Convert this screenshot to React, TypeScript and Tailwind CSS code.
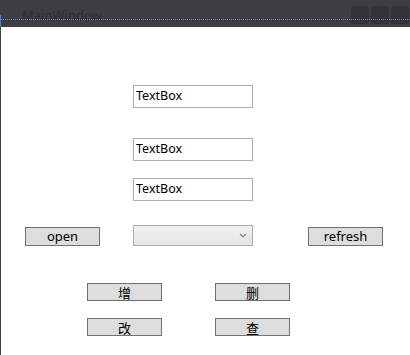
import React from "react";

const font = { fontFamily: '"Noto Sans", "Noto Sans CJK SC", sans-serif' };
const cjk = { fontFamily: '"Noto Sans CJK SC", sans-serif' };

function Btn({ label, w = "w-[75px]", h = "h-[19px]", ml, zh }: { label: string; w?: string; h?: string; ml: string; zh?: boolean }) {
  return (
    <div
      className={`${ml} ${w} ${h} shrink-0 bg-[#dddddd] border border-[#707070] flex items-center justify-center text-[13px] leading-none text-black`}
      style={zh ? cjk : font}
    >
      {label}
    </div>
  );
}

function TextBox({ mt }: { mt: string }) {
  return (
    <div
      className={`${mt} ml-[132px] w-[120px] h-[23px] border border-[#abadb3] bg-white flex items-start pl-[2px] pt-[1px] text-[12.5px] leading-[17px] text-black`}
      style={font}
    >
      TextBox
    </div>
  );
}

export default function App() {
  return (
    <div className="w-[410px] h-[355px] bg-white flex flex-col overflow-hidden">
      <div className="relative h-[27px] shrink-0 bg-[#3e3e42] flex items-start">
        <div className="ml-[22px] mt-[6px] text-[13px] leading-[18px] text-[#2e2e32]" style={font}>
          MainWindow
        </div>
        <div className="ml-auto mt-[6px] mr-[1px] flex gap-[2px]">
          <div className="w-[18px] h-[18px] rounded-[3px] bg-[#333337]" />
          <div className="w-[18px] h-[18px] rounded-[3px] bg-[#333337]" />
          <div className="w-[18px] h-[18px] rounded-[3px] bg-[#333337]" />
        </div>
        <div className="absolute left-0 right-0 top-[19px] border-t border-dotted border-[#5b8ef0]" />
        <div className="absolute left-0 top-[15px] w-[1px] h-[12px] bg-[#3c7df0]" />
      </div>
      <div className="flex-1 border-l border-[#3f3f46] flex flex-col">
        <TextBox mt="mt-[58px]" />
        <TextBox mt="mt-[30px]" />
        <TextBox mt="mt-[17px]" />
        <div className="mt-[24px] flex items-end">
          <Btn label="open" ml="ml-[24px]" />
          <div className="ml-[33px] w-[120px] h-[21px] border border-[#acacac] bg-gradient-to-b from-[#f0f0f0] to-[#e5e5e5] flex items-center justify-end pr-[5px]">
            <svg width="8" height="5" viewBox="0 0 8 5">
              <path d="M1 1 L4 4 L7 1" stroke="#808080" strokeWidth="1.2" fill="none" />
            </svg>
          </div>
          <Btn label="refresh" ml="ml-[55px]" />
        </div>
        <div className="mt-[37px] flex">
          <Btn label="增" h="h-[18px]" ml="ml-[86px]" zh />
          <Btn label="删" h="h-[18px]" ml="ml-[53px]" zh />
        </div>
        <div className="mt-[17px] flex">
          <Btn label="改" h="h-[18px]" ml="ml-[86px]" zh />
          <Btn label="查" h="h-[18px]" ml="ml-[53px]" zh />
        </div>
      </div>
    </div>
  );
}
